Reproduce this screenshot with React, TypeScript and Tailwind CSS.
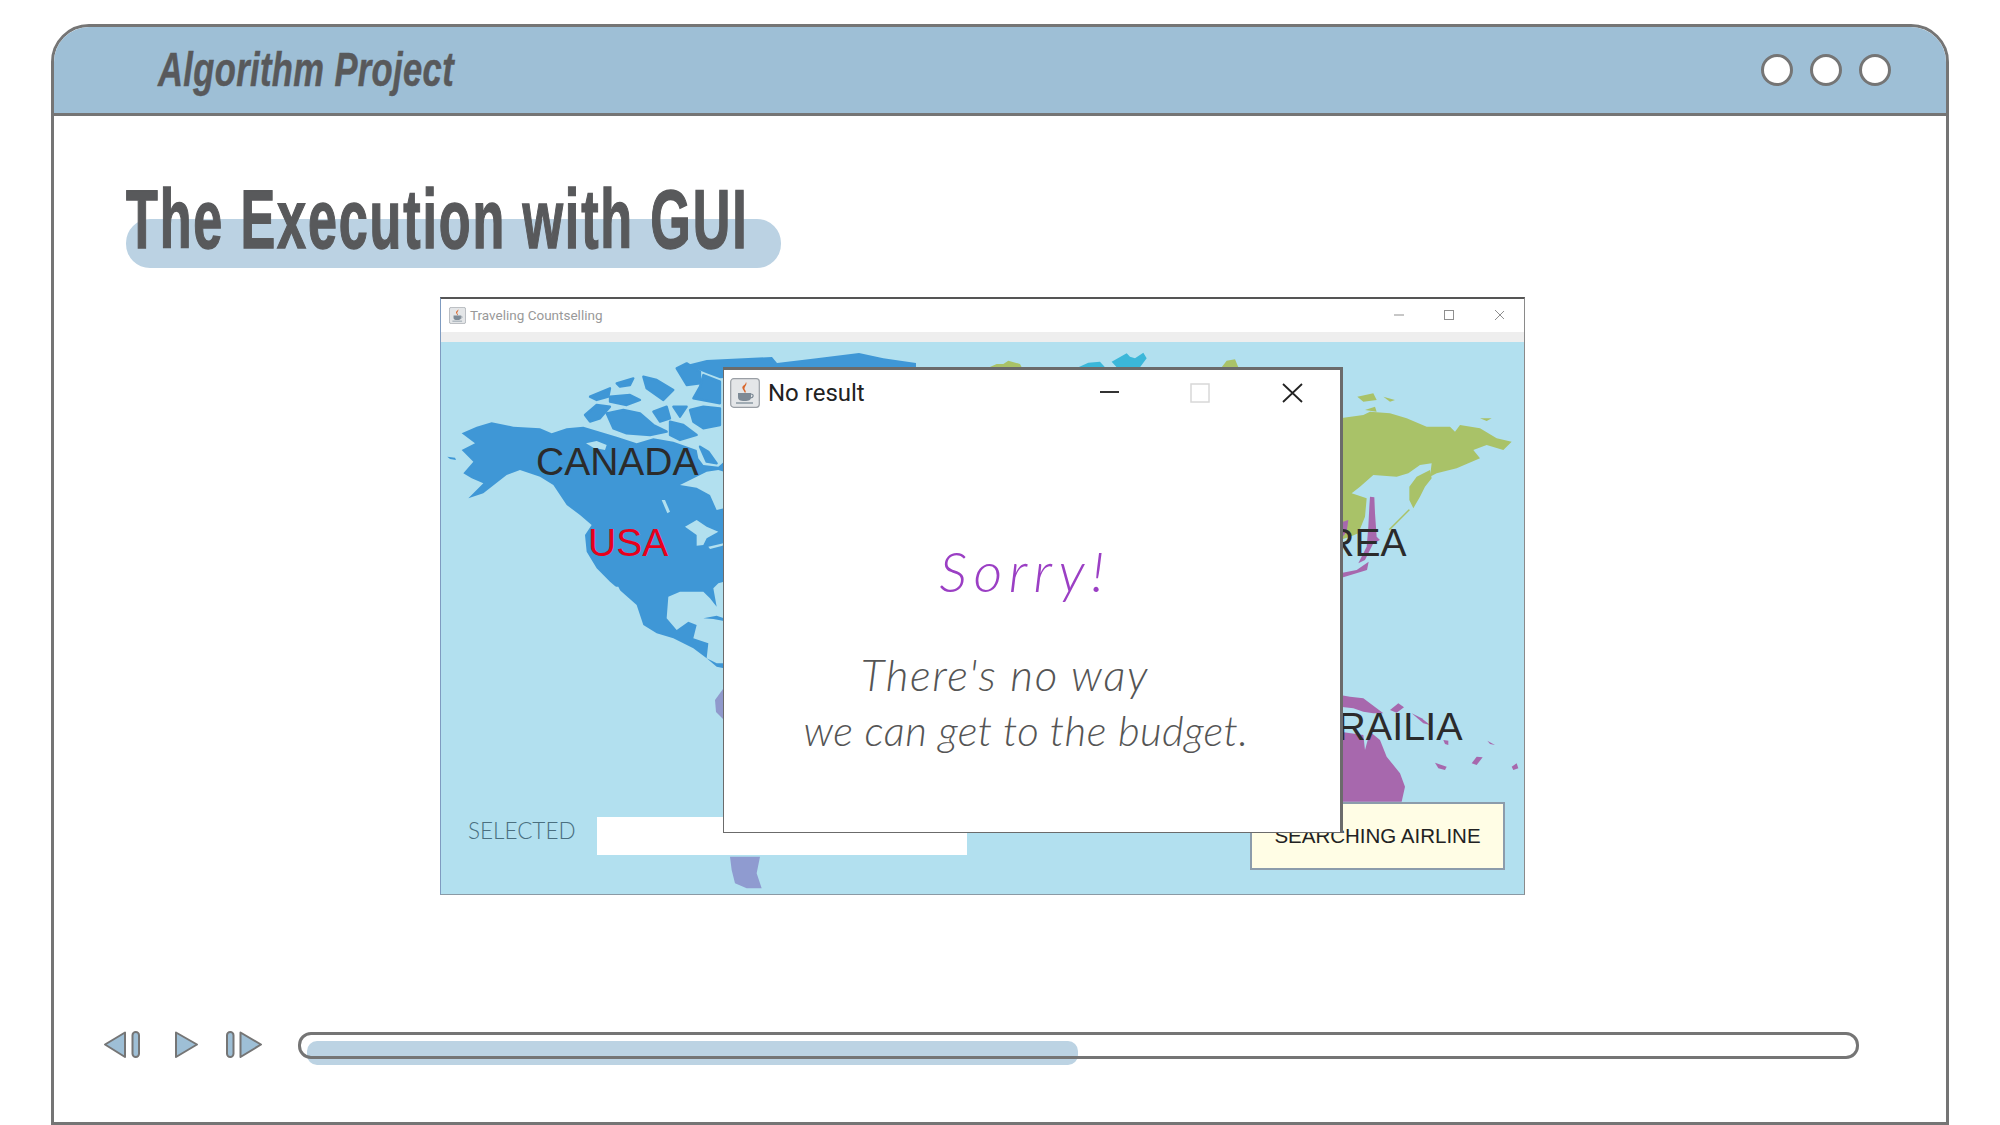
import React from "react";

const JavaIcon = ({ className }: { className: string }) => (
  <svg className={className} viewBox="0 0 30 30">
    <rect x="0.7" y="0.7" width="28.6" height="28.6" rx="3" fill="#e4e6e8" stroke="#9a9fa5" strokeWidth="1.2" />
    <path d="M16 4c2 3-3 5-1 8 1 1 1 2 0 3-1-3-4-5-2-7 1-1 3-2 3-4z" fill="#d9662b" />
    <path d="M8 15h13v4c0 3-2 4-6.500 4S8 22 8 19z" fill="#7d8a96" />
    <path d="M21 16c3 0 3 4-1 4" fill="none" stroke="#7d8a96" strokeWidth="1.2" />
    <path d="M6 25h17" stroke="#8b98a3" strokeWidth="1.500" />
  </svg>
);

const land = (points: string, fill: string) => <polygon points={points} fill={fill} />;

const WorldMap = () => {
  const blue = "#3f97d6";
  const sea = "#b2e0ef";
  const green = "#a9c268";
  const purple = "#a768ad";
  return (
    <svg className="absolute inset-0 w-[1083px] h-[553px]" viewBox="441 342 1083 553">
      {/* north america */}
      <g transform="translate(440 335) scale(0.33333)">
        {land(
          "65,295 110,275 155,262 220,275 300,280 335,295 380,280 430,275 480,290 530,305 590,325 640,310 700,320 770,345 775,370 790,390 835,395 852,380 852,740 835,745 820,760 830,815 810,790 790,770 720,770 685,785 680,850 710,885 745,860 770,870 760,910 805,925 800,970 830,985 852,985 852,1000 830,995 800,970 760,940 700,910 650,895 610,870 590,810 545,770 510,740 470,700 440,650 435,600 455,570 420,540 380,510 340,450 300,425 240,405 200,420 130,475 85,490 130,445 95,430 70,415 100,380 65,345 105,325",
          blue,
        )}
        {land("22,365 45,368 48,375 30,372", blue)}
        {land("720,450 770,458 810,480 830,525 852,520 852,410 835,405 800,410 770,425", sea)}
        {land("735,575 770,555 800,575 835,590 800,610 790,630 770,632 770,600", sea)}
        {land("805,635 850,625 848,632 810,642", sea)}
        {land("665,495 675,495 690,530 682,535", sea)}
        {land("438,325 470,318 500,330 495,345 460,338", sea)}
        {land("525,755 535,755 575,838 565,838", sea)}
        {land("790,850 830,842 852,850 852,858 820,852", blue)}
        {/* arctic islands, fattened a little so they sit as close as in the map */}
        <g stroke={blue} strokeWidth="7" strokeLinejoin="round">
          {land("450,185 510,160 505,185 470,195", blue)}
          {land("510,185 570,180 600,195 560,210 510,200", blue)}
          {land("530,145 580,130 570,150 540,155", blue)}
          {land("435,240 470,210 510,215 480,250 450,260", blue)}
          {land("500,235 550,225 600,235 640,270 680,290 630,300 560,295 520,280", blue)}
          {land("610,125 650,135 700,165 670,195 620,160", blue)}
          {land("640,230 680,215 690,250 660,260", blue)}
          {land("700,215 740,215 720,245", blue)}
          {land("690,260 730,270 770,300 720,315 690,300", blue)}
          {land("750,225 790,215 840,220 840,270 790,280 760,260", blue)}
          {land("710,100 740,85 780,110 780,145 740,150", blue)}
          {land("790,120 840,140 840,205 760,190 780,155", blue)}
          {land("780,335 805,350 830,385 800,380", blue)}
        </g>
        {land("740,90 800,75 996,66 1011,84 1130,70 1257,54 1330,70 1428,84 1428,100 840,130 800,115", blue)}
      </g>
      {/* south america tips */}
      <polygon points="715,700 723,689 723,719 716,712" fill="#9099cc" />
      <g transform="translate(440 780) scale(0.33333)">
        {land("870,230 960,230 950,280 965,325 920,325 885,310 875,270", "#8f9bd0")}
      </g>
      {/* top fringe, mostly behind the dialog */}
      <g transform="translate(960 340) scale(0.33333)">
        {land("88,82 110,72 130,72 145,62 180,72 185,82", green)}
        {land("355,82 385,68 420,65 435,82", "#3bb7d9")}
        {land("455,65 500,40 510,50 525,55 550,38 560,55 540,82 470,82", "#3bb7d9")}
        {land("785,82 800,62 825,58 835,82", green)}
      </g>
      {/* russia and japan */}
      <g transform="translate(1330 340) scale(0.33333)">
        {land(
          "30,235 100,225 120,215 180,220 230,235 290,260 360,260 375,275 390,255 450,265 500,295 545,305 520,330 470,315 430,330 450,355 380,385 320,400 300,410 305,370 270,375 235,400 200,410 130,405 90,440 65,460 110,475 105,530 85,580 60,590 30,600",
          green,
        )}
        {land("300,390 305,415 285,440 270,470 250,505 238,480 238,440 260,410", green)}
        {land("82,170 130,160 140,180 100,185", green)}
        {land("160,170 195,180 180,185", green)}
        {land("450,235 485,235 470,243", green)}
        {land("105,210 135,200 140,215", green)}
        {land("240,510 180,570 176,568 236,508", green)}
        {land("120,470 133,472 135,520 140,590 150,600 130,610 115,640 105,660 85,670 110,620 115,560 118,500", purple)}
        {land("30,548 55,540 50,575 30,600", purple)}
        {land("30,715 111,690 116,665 80,690 30,700", purple)}
      </g>
      {/* australia and islands */}
      <g transform="translate(1330 670) scale(0.33333)">
        {land("30,75 60,80 100,85 140,115 160,130 130,130 100,125 70,115 30,110", purple)}
        {land("30,185 100,195 105,240 120,185 150,210 170,260 210,310 225,350 215,395 30,395", purple)}
        {land("180,120 205,100 222,112 200,128", purple)}
        {land("245,130 275,145 300,165 280,160", purple)}
        {land("315,278 350,290 345,300 325,295", purple)}
        {land("340,210 355,212 355,225 345,222", purple)}
        {land("425,280 440,260 458,262 440,285", purple)}
        {land("472,212 495,225 480,222", purple)}
        {land("545,290 560,280 565,295 550,300", purple)}
      </g>
    </svg>
  );
};

const AppWindow = () => (
  <div className="relative ml-[386px] mt-[36px] w-[1085px] h-[598px] flex flex-col border-t-2 border-t-[#555555] border-l border-l-[#7f9bc0] border-r border-r-[#8a8a8a] border-b border-b-[#8a9aa5] bg-white">
    <div className="h-[33px] flex items-center px-2 pb-[1px] shrink-0">
      <JavaIcon className="w-[17px] h-[17px]" />
      <span className="ml-[4px] text-[13.500px] text-[#999999] font-['Roboto',sans-serif]">Traveling Countselling</span>
      <svg className="ml-auto mr-[12px] w-[110px] h-[12px]" viewBox="0 0 110 12" fill="none" stroke="#8f8f8f">
        <path d="M0 6h10" />
        <rect x="50.500" y="1.500" width="9" height="9" />
        <path d="M101 1l10 10M111 1l-10 10" />
      </svg>
    </div>
    <div className="h-[10px] bg-[#eeeeee] shrink-0" />
    <div className="relative flex-1 bg-[#b2e0ef] flex items-end font-['Liberation_Sans',Arial,sans-serif]">
      <WorldMap />
      <span className="absolute left-[95px] top-[100px] text-[39px] leading-none text-[#2b2b2b]">CANADA</span>
      <span className="absolute left-[147px] top-[181px] text-[39px] leading-none text-[#e8001c]">USA</span>
      <span className="absolute left-[829px] top-[181px] text-[39px] leading-none text-[#2b2b2b]">KOREA</span>
      <span className="absolute left-[791px] top-[365px] text-[39.500px] leading-none text-[#2b2b2b]">AUSTRAILIA</span>

      <div className="relative w-full h-[68px] mb-[24px] pl-[27px] pr-[19px] flex items-center">
        <span className="w-[129px] mb-[10px] text-[22.500px] font-light text-[#4a6f7f] font-['Lato',sans-serif]">SELECTED</span>
        <div className="w-[370px] h-[38px] bg-white" />
        <button className="ml-auto w-[255px] h-[68px] bg-[#fffde5] border-2 border-[#8c9cab] text-[20.500px] text-[#222222]">
          SEARCHING AIRLINE
        </button>
      </div>
    </div>

    {/* result dialog */}
    <div className="absolute left-[282px] top-[68px] w-[620px] h-[466px] bg-white flex flex-col border-t-[3px] border-r-[3px] border-l border-b border-[#6b6b6b]">
      <div className="h-[42px] flex items-center pl-[6px] pt-[4px] shrink-0">
        <JavaIcon className="w-[30px] h-[30px]" />
        <span className="ml-[8px] text-[24px] text-[#222222] font-['Roboto',sans-serif]">No result</span>
        <svg className="ml-[235px] w-[203px] h-[20px]" viewBox="0 0 203 20" fill="none">
          <path d="M0 9h19" stroke="#333333" strokeWidth="2" />
          <rect x="91" y="1" width="18" height="18" stroke="#d8d8d8" strokeWidth="1.500" />
          <path d="M183 1l19 18M202 1l-19 18" stroke="#222222" strokeWidth="1.800" />
        </svg>
      </div>
      <div className="flex flex-col text-center font-['Lato',sans-serif] italic font-light">
        <span className="mt-[124px] pr-[14px] text-[56px] leading-[70px] tracking-[6.500px] text-[#9b3fc4]">Sorry!</span>
        <span className="mt-[41px] pr-[54px] text-[44px] leading-[54px] tracking-[1.700px] text-[#555555]">There's no way</span>
        <span className="mt-[2px] pr-[12px] text-[42px] leading-[54px] tracking-[0.450px] text-[#555555]">we can get to the budget.</span>
      </div>
    </div>
  </div>
);

const Controls = () => (
  <svg className="w-[160px] h-[28px] shrink-0" viewBox="103 1032 160 28" fill="#9ebfd6" stroke="#757575" strokeWidth="2" strokeLinejoin="round">
    <polygon points="105,1045.500 125,1033.500 125,1058" />
    <rect x="132.500" y="1033" width="6.500" height="25" rx="3.200" />
    <polygon points="176,1033.500 197,1045.500 176,1058" />
    <rect x="227" y="1033" width="6.500" height="25" rx="3.200" />
    <polygon points="240.500,1033.500 261,1045.500 240.500,1058" />
  </svg>
);

export default function App() {
  return (
    <div className="w-[2000px] h-[1125px] overflow-hidden bg-white pt-[24px] px-[51px] font-['Liberation_Sans',Arial,sans-serif]">
      <div className="h-full flex flex-col border-[3px] border-[#757575] rounded-t-[38px] overflow-hidden">
        <header className="h-[89px] shrink-0 flex items-center justify-between pl-[104px] pr-[55px] bg-[#9ebfd6] border-b-[3px] border-[#757575]">
          <span className="inline-block origin-left scale-x-[0.72] text-[48px] leading-none font-bold italic tracking-[0.500px] text-[#58595b] whitespace-nowrap [-webkit-text-stroke:0.5px_#58595b]">
            Algorithm Project
          </span>
          <div className="flex gap-[17px]">
            <div className="w-[32px] h-[32px] rounded-full bg-white border-[3px] border-[#757575]" />
            <div className="w-[32px] h-[32px] rounded-full bg-white border-[3px] border-[#757575]" />
            <div className="w-[32px] h-[32px] rounded-full bg-white border-[3px] border-[#757575]" />
          </div>
        </header>

        <div className="relative ml-[72px] mt-[61px] h-[84px] shrink-0">
          <div className="absolute left-0 top-[42px] w-[655px] h-[49px] rounded-[24px] bg-[#bbd2e3]" />
          <h1 className="relative inline-block origin-left scale-x-[0.62] text-[84px] leading-none font-bold tracking-[3px] text-[#58595b] whitespace-nowrap [-webkit-text-stroke:1.5px_#58595b]">
            The Execution with GUI
          </h1>
        </div>

        <AppWindow />

        <div className="mt-[136px] ml-[49px] flex items-center">
          <Controls />
          <div className="relative ml-[35px] w-[1561px] h-[27px]">
            <div className="absolute left-[9px] top-[9px] w-[771px] h-[24px] rounded-[10px] bg-[#bcd3e3]" />
            <div className="absolute inset-0 rounded-[13px] border-[3px] border-[#757575]" />
          </div>
        </div>
      </div>
    </div>
  );
}
